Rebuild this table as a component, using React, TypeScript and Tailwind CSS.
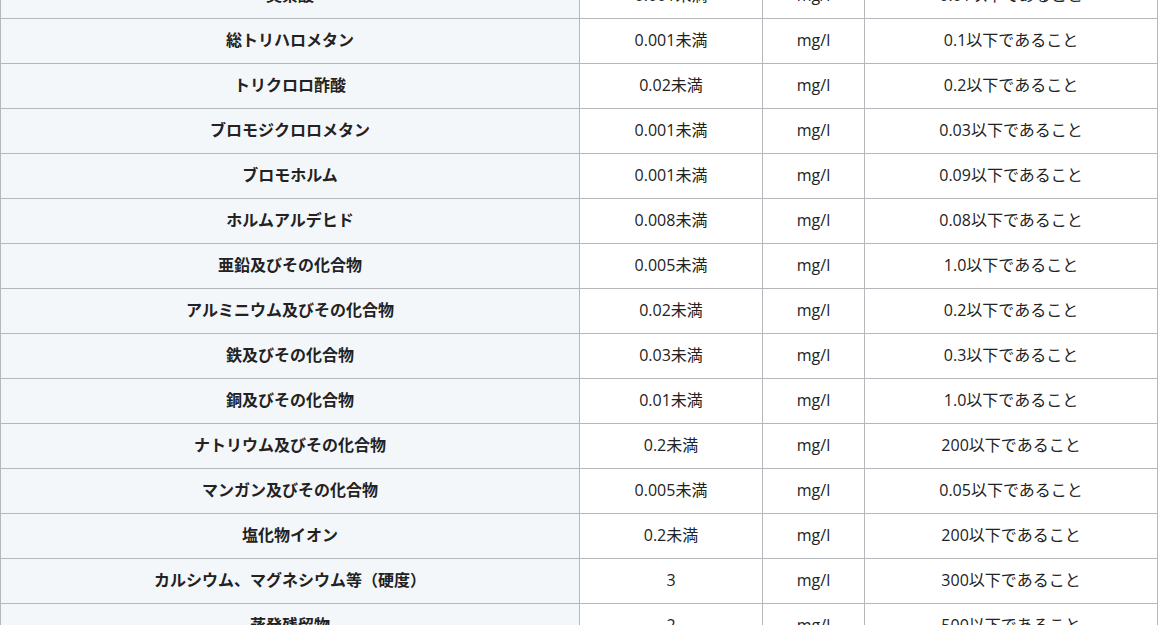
const rows = [
  { name: "臭素酸", value: "0.001未満", unit: "mg/l", standard: "0.01以下であること" },
  { name: "総トリハロメタン", value: "0.001未満", unit: "mg/l", standard: "0.1以下であること" },
  { name: "トリクロロ酢酸", value: "0.02未満", unit: "mg/l", standard: "0.2以下であること" },
  { name: "ブロモジクロロメタン", value: "0.001未満", unit: "mg/l", standard: "0.03以下であること" },
  { name: "ブロモホルム", value: "0.001未満", unit: "mg/l", standard: "0.09以下であること" },
  { name: "ホルムアルデヒド", value: "0.008未満", unit: "mg/l", standard: "0.08以下であること" },
  { name: "亜鉛及びその化合物", value: "0.005未満", unit: "mg/l", standard: "1.0以下であること" },
  { name: "アルミニウム及びその化合物", value: "0.02未満", unit: "mg/l", standard: "0.2以下であること" },
  { name: "鉄及びその化合物", value: "0.03未満", unit: "mg/l", standard: "0.3以下であること" },
  { name: "銅及びその化合物", value: "0.01未満", unit: "mg/l", standard: "1.0以下であること" },
  { name: "ナトリウム及びその化合物", value: "0.2未満", unit: "mg/l", standard: "200以下であること" },
  { name: "マンガン及びその化合物", value: "0.005未満", unit: "mg/l", standard: "0.05以下であること" },
  { name: "塩化物イオン", value: "0.2未満", unit: "mg/l", standard: "200以下であること" },
  { name: "カルシウム、マグネシウム等（硬度）", value: "3", unit: "mg/l", standard: "300以下であること" },
  { name: "蒸発残留物", value: "2", unit: "mg/l", standard: "500以下であること" },
];

export default function App() {
  return (
    <div className="h-[625px] overflow-hidden bg-white text-[#222] font-['Open_Sans','Noto_Sans_CJK_JP',sans-serif] text-[16px]">
      <table className="-mt-[27px] w-[1157px] table-fixed border-collapse">
        <colgroup>
          <col className="w-[579px]" />
          <col className="w-[183px]" />
          <col className="w-[102px]" />
          <col className="w-[293px]" />
        </colgroup>
        <tbody>
          {rows.map((r) => (
            <tr key={r.name} className="h-[45px]">
              <th className="border border-[#b4b8bd] bg-[#f4f7fa] pb-[2px] text-center font-bold">{r.name}</th>
              <td className="border border-[#b4b8bd] pb-[2px] text-center">{r.value}</td>
              <td className="border border-[#b4b8bd] pb-[2px] text-center">{r.unit}</td>
              <td className="border border-[#b4b8bd] pb-[2px] text-center">{r.standard}</td>
            </tr>
          ))}
        </tbody>
      </table>
    </div>
  );
}
